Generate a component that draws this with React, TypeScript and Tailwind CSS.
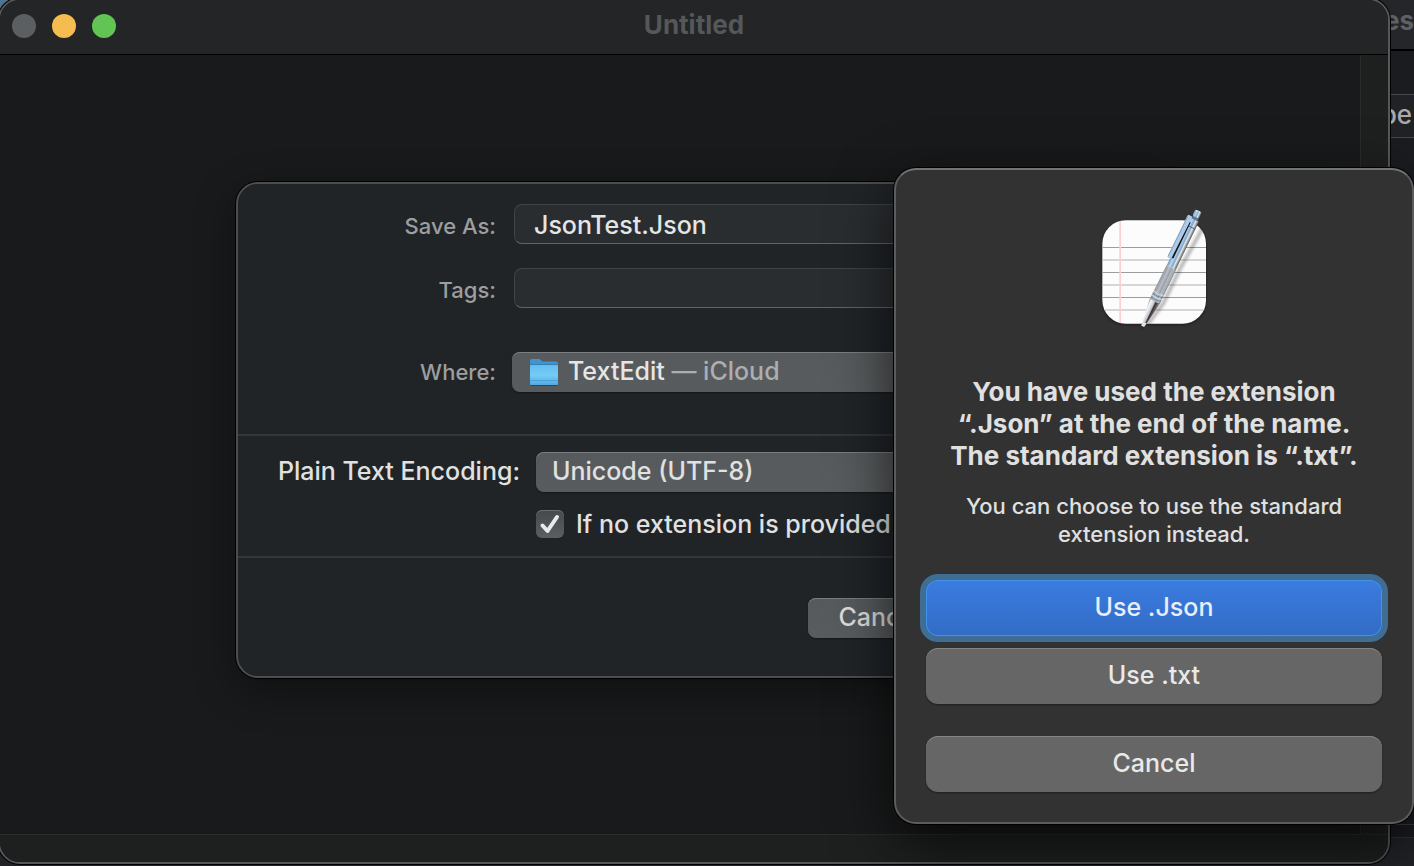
import { useState } from "react";

function TextEditIcon() {
  return (
    <svg className="size-32" viewBox="30 39 384 384" aria-hidden="true">
      <defs>
        <linearGradient id="barrel" x1="0" x2="1" y1="0" y2="0">
          <stop offset="0" stopColor="#6d8fb4" />
          <stop offset="0.3" stopColor="#b9d8f5" />
          <stop offset="0.55" stopColor="#86a5c4" />
          <stop offset="0.7" stopColor="#d9ecfb" />
          <stop offset="0.85" stopColor="#a9a393" />
          <stop offset="1" stopColor="#4d5057" />
        </linearGradient>
        <linearGradient id="grip" x1="0" x2="1" y1="0" y2="0">
          <stop offset="0" stopColor="#8a9097" />
          <stop offset="0.3" stopColor="#b9c0c7" />
          <stop offset="0.6" stopColor="#a3a9b0" />
          <stop offset="0.8" stopColor="#c3c7cb" />
          <stop offset="1" stopColor="#7c8186" />
        </linearGradient>
        <linearGradient id="cone" x1="0" x2="1" y1="0" y2="0">
          <stop offset="0" stopColor="#9aa1a8" />
          <stop offset="0.2" stopColor="#f4f7f9" />
          <stop offset="0.5" stopColor="#c3c8cd" />
          <stop offset="0.62" stopColor="#3d3034" />
          <stop offset="0.82" stopColor="#6b6163" />
          <stop offset="1" stopColor="#b5b6b8" />
        </linearGradient>
        <filter id="soft" x="-50%" y="-10%" width="200%" height="120%">
          <feGaussianBlur stdDeviation="5" />
        </filter>
        <clipPath id="paper">
          <rect x="67" y="76" width="311" height="310" rx="70" />
        </clipPath>
      </defs>
      <rect x="67" y="80" width="311" height="310" rx="70" fill="#000" opacity="0.4" filter="url(#soft)" />
      <rect x="67" y="76" width="311" height="310" rx="70" fill="#fcfcfc" />
      <g clipPath="url(#paper)">
        <path d="M67 157.500H378M67 232.500H378M67 307.500H378" stroke="#9b9ca0" strokeWidth="3" />
        <path d="M67 195H378M67 270H378M67 345H378" stroke="#c9c9cb" strokeWidth="5" />
        <path d="M120.500 76V386" stroke="#fad0d0" strokeWidth="5" />
        <path d="M200 392L250 325L300 222L372 92" fill="none" stroke="#000" strokeWidth="10" opacity="0.3" filter="url(#soft)" />
      </g>
      <g transform="translate(184 402) rotate(25.700)">
        <path d="M-4 -8L-17 -94H18L5 -8Z" fill="url(#cone)" />
        <path d="M-2 0L-4 -10H5L3 0Z" fill="#2b2b2e" />
        <path d="M-4 -9L-5 -22H7L5 -9Z" fill="#dfe3e6" />
        <path d="M-16 -94Q0 -88 17 -94L17 -206H-15Z" fill="url(#grip)" />
        <path d="M-16 -100Q0 -94 17 -100M-16 -112Q0 -106 17 -112" fill="none" stroke="#6f8397" strokeWidth="2.500" />
        <path d="M-16 -106Q0 -100 17 -106M-16 -119Q0 -113 17 -119" fill="none" stroke="#e0edf8" strokeWidth="2" />
        <path d="M-8 -124V-200M2 -122V-202M10 -124V-202" stroke="#8f979f" strokeWidth="1.500" />
        <rect x="-14" y="-366" width="30" height="160" fill="url(#barrel)" />
        <path d="M-14 -340H16" stroke="#47658a" strokeWidth="2.500" />
        <path d="M-8 -232V-352" stroke="#16181c" strokeWidth="6" />
        <path d="M-23 -366Q-23 -370 -19 -370H-8V-358L-11 -232Q-11 -228 -15 -228H-20Q-24 -228 -24 -232Z" fill="#adcbe8" />
        <path d="M-21 -364L-22 -232" stroke="#7391b0" strokeWidth="2" />
        <rect x="-8" y="-376" width="19" height="11" fill="#55779c" />
        <rect x="-10" y="-394" width="22" height="21" rx="5" fill="url(#barrel)" />
        <path d="M-6 -392H8" stroke="#d3e8fb" strokeWidth="3" />
      </g>
    </svg>
  );
}

function FolderIcon() {
  return (
    <svg className="h-7 w-[30px]" viewBox="0 0 30 28" aria-hidden="true">
      <defs>
        <linearGradient id="folder" x1="0" x2="0" y1="0" y2="1">
          <stop offset="0" stopColor="#63bdf0" />
          <stop offset="0.5" stopColor="#75cbf8" />
          <stop offset="1" stopColor="#52aae0" />
        </linearGradient>
      </defs>
      <path d="M2 3Q2 1 4 1H11Q12 1 13 2L14.500 3.500H28Q30 3.500 30 5.500V12H2Z" fill="#3f95d0" />
      <rect x="2" y="7" width="28" height="20" rx="1" fill="url(#folder)" />
      <path d="M2 6.500H30" stroke="#357fb4" />
      <path d="M2 22.500H30" stroke="#4da2d8" />
      <path d="M3 27.500H29" stroke="#31444f" />
    </svg>
  );
}

const popup = "bg-linear-to-b from-[#565a5c] to-[#595c5e] shadow-[inset_0_1px_0_#7b7e80,0_1px_2px_rgba(0,0,0,0.4)]";
const field =
  "h-10 w-[580px] rounded-lg border border-[#3f4345] border-b-[#606466] bg-[#2a2d30] px-[19px] pt-0.5 text-[25px] text-[#e4e5e5] outline-none";
const alertButton =
  "h-14 w-full rounded-xl bg-[#666666] text-[25px] font-medium text-[#e9e9e9] shadow-[inset_0_1px_0_#868686,0_1px_2px_rgba(0,0,0,0.4)]";

function SaveSheet() {
  const [name, setName] = useState<string>("JsonTest.Json");
  const [tags, setTags] = useState<string>("");
  const [useTxt, setUseTxt] = useState<boolean>(true);

  return (
    <form
      onSubmit={(event) => event.preventDefault()}
      className="absolute inset-x-0 top-[182px] mx-auto w-[916px] rounded-[22px] border-2 border-[#4b4d4f] bg-[#202427] pb-[38px] font-medium shadow-[0_0_0_1px_#000,0_12px_40px_rgba(0,0,0,0.4)]"
    >
      <div className="flex flex-col pt-5 pb-[42px] text-[22px] text-[#9c9e9f]">
        <div className="mb-6 flex items-center">
          <label htmlFor="name" className="w-[258px] pt-1 text-right">
            Save As:
          </label>
          <input
            id="name"
            className={`${field} ml-[18px]`}
            value={name}
            onChange={(event) => setName(event.target.value)}
          />
        </div>
        <div className="mb-11 flex items-center">
          <label htmlFor="tags" className="w-[258px] pt-1 text-right">
            Tags:
          </label>
          <input
            id="tags"
            className={`${field} ml-[18px]`}
            value={tags}
            onChange={(event) => setTags(event.target.value)}
          />
        </div>
        <div className="flex items-center">
          <label htmlFor="where" className="w-[258px] text-right">
            Where:
          </label>
          <div className={`relative ml-4 flex h-10 w-[584px] items-center rounded-lg px-4 ${popup}`}>
            <FolderIcon />
            <span className="ml-2.5 text-[25px] text-[#e6e6e6]">
              TextEdit <span className="text-[#acaeaf]">— iCloud</span>
            </span>
            <select id="where" className="absolute inset-0 opacity-0">
              <option>TextEdit — iCloud</option>
            </select>
          </div>
        </div>
      </div>
      <div className="border-y-2 border-[#323638] py-4 text-[25px] text-[#e0e1e1]">
        <div className="flex items-center">
          <label htmlFor="encoding" className="w-[282px] text-right">
            Plain Text Encoding:
          </label>
          <select id="encoding" className={`ml-4 h-10 w-[560px] appearance-none rounded-lg px-4 ${popup}`}>
            <option>Unicode (UTF-8)</option>
          </select>
        </div>
        <div className="mt-4 ml-[298px] flex h-8 items-center gap-3">
          <span className="relative size-7">
            <input
              id="txt"
              type="checkbox"
              className="peer block size-7 appearance-none rounded-md bg-linear-to-b from-[#45494b] to-[#5b5f61] shadow-[inset_0_1px_0_#6b6e70]"
              checked={useTxt}
              onChange={(event) => setUseTxt(event.target.checked)}
            />
            <svg
              className="pointer-events-none absolute inset-0 hidden size-7 peer-checked:block"
              viewBox="0 0 28 28"
              fill="none"
              stroke="#e9e9e9"
              strokeWidth="4"
              strokeLinecap="round"
              strokeLinejoin="round"
            >
              <path d="M6.500 15.500L11.500 21L21 7" />
            </svg>
          </span>
          <label htmlFor="txt" className="pt-0.5">
            If no extension is provided
          </label>
        </div>
      </div>
      <div className="mt-10 flex pl-[570px]">
        <button type="button" className={`h-10 w-36 rounded-lg text-[25px] text-[#dcdddd] ${popup}`}>
          Cancel
        </button>
      </div>
    </form>
  );
}

function ExtensionAlert() {
  return (
    <div
      role="alertdialog"
      aria-labelledby="alert-title"
      className="absolute top-[168px] right-0 flex w-[520px] flex-col items-center rounded-[22px] border-2 border-[#5c5c5c] border-t-[#737373] bg-[#323232] px-[30px] pt-[38px] pb-[30px] text-center text-[#e0e0e0] shadow-[0_0_0_1px_#000,0_20px_60px_rgba(0,0,0,0.7)]"
    >
      <TextEditIcon />
      <h2 id="alert-title" className="mt-10 text-[26px] leading-8 font-bold whitespace-nowrap">
        You have used the extension
        <br />
        “.Json” at the end of the name.
        <br />
        The standard extension is “.txt”.
      </h2>
      <p className="mt-5 text-[22px] leading-7 font-medium">
        You can choose to use the standard
        <br />
        extension instead.
      </p>
      <button className="mt-8 h-14 w-full rounded-xl bg-linear-to-b from-[#3b7ce0] to-[#326cc5] text-[25px] font-medium text-[#e8eefa] shadow-[inset_0_0_0_1px_#4392ec,0_0_0_6px_#3f6d94]">
        Use .Json
      </button>
      <button className={`${alertButton} mt-3`}>Use .txt</button>
      <button className={`${alertButton} mt-8`}>Cancel</button>
    </div>
  );
}

export default function App() {
  return (
    <div className="relative h-screen overflow-hidden bg-[#16171a] font-[Inter,'Liberation_Sans',sans-serif]">
      {/* window behind */}
      <div className="flex h-full flex-col items-end overflow-hidden bg-[#1b1c20]">
        <div className="flex h-[51px] w-full items-center justify-end border-b-2 border-black bg-[#25262a] pb-2 text-[26px] font-bold text-[#5f6063]">
          es
        </div>
        <div className="mt-[43px] flex h-11 w-10 items-center justify-end border-y border-[#46474a] bg-[#212225] pr-0.5 pb-1 text-[26px] font-medium text-[#a9aaab]">
          pe
        </div>
        <div className="mt-auto h-[42px] w-full border-t border-[#3c3d41] pt-3">
          <div className="h-full border-t border-[#303135] bg-[#222327]" />
        </div>
      </div>
      <div className="absolute top-0 left-0 size-4 bg-[#4f7390]" />

      <div className="absolute -top-0.5 right-6 bottom-0.5 -left-0.5 flex flex-col overflow-hidden rounded-[22px] border-2 border-[#55585a] bg-[#191a1b] shadow-[0_0_0_1px_#000]">
        <header className="flex h-[55px] shrink-0 items-center border-b border-black bg-[#232527] pb-0.5">
          <div className="flex-1">
            <div className="flex gap-4 pl-3">
              <button aria-label="Close" className="size-6 rounded-full bg-[#5c5f62]" />
              <button aria-label="Minimize" className="size-6 rounded-full bg-[#f5bd4f]" />
              <button aria-label="Zoom" className="size-6 rounded-full bg-[#61c454]" />
            </div>
          </div>
          <h1 className="pb-1 text-[26px] font-bold text-[#555759]">Untitled</h1>
          <div className="flex-1" />
        </header>
        <div className="flex flex-1">
          <main className="flex-1" />
          <div className="w-7 border-l border-[#2a2c2b] bg-[#1e201f]" />
        </div>
        <div className="h-7 shrink-0 border-t border-[#2a2c2b] bg-[#1e201f]" />
        <SaveSheet />
      </div>

      <ExtensionAlert />
    </div>
  );
}
